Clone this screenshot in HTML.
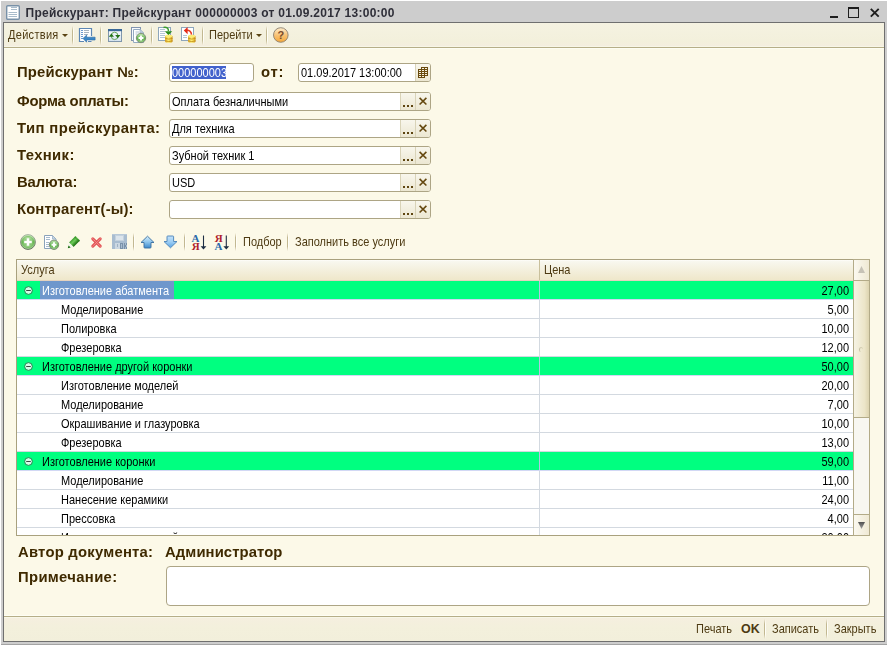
<!DOCTYPE html>
<html><head><meta charset="utf-8">
<style>
*{box-sizing:border-box;margin:0;padding:0}
html,body{width:887px;height:645px;overflow:hidden;background:#fff}
body{position:relative;font-family:"Liberation Sans",sans-serif;font-size:11px;color:#000}
.a{position:absolute}
.t{position:absolute;white-space:nowrap;line-height:13px;transform:scaleY(1.12);transform-origin:0 6.3px}
.lbl{position:absolute;white-space:nowrap;font-weight:bold;font-size:14px;line-height:16px;color:#3f2a00;letter-spacing:0.45px;transform:scaleX(1.06);transform-origin:0 0}
.fld{position:absolute;background:#fff;border:1px solid #ada585;border-radius:3px;height:19px}
.btn{position:absolute;top:0;bottom:0;width:15px;border-left:1px solid #d9d3b8;background:linear-gradient(#f8f6ec,#ece7d2)}
.sep{position:absolute;width:2px;background:linear-gradient(90deg,#c2b891 50%,#fffef8 50%);-webkit-mask-image:linear-gradient(transparent,#000 25%,#000 75%,transparent)}
.row{position:absolute;left:17px;width:836px;height:19px;border-bottom:1px solid #d3d9e0;background:#fff}
.row.g{background:#00ff80;border-bottom-color:#d2d8f4}
.cell{position:absolute;top:3px;line-height:13px;white-space:nowrap;transform:scaleY(1.12);transform-origin:0 6.3px}
</style></head><body>
<!-- window frame -->
<div class="a" style="left:1px;top:1px;width:886px;height:644px;background:#cdcdcd"></div>
<div class="a" style="left:1px;top:644px;width:886px;height:1px;background:#a4a4a4"></div>
<!-- title icon -->
<svg class="a" style="left:5px;top:4px" width="16" height="17" viewBox="0 0 16 17">
 <rect x="1.7" y="1.7" width="12.6" height="13.6" rx="1" fill="#fff" stroke="#7891a8" stroke-width="1.4"/>
 <path d="M6 3.5h6M6 5.5h6M3.5 8.5h8.5M3.5 10.5h8.5M3.5 12.5h8.5" stroke="#a9bccb" stroke-width="1"/>
</svg>
<div class="t" style="transform:scaleY(1.08);transform-origin:0 7px;left:25.5px;top:7px;font-weight:bold;font-size:12px;letter-spacing:0.26px;color:#2e2e38">Прейскурант: Прейскурант 000000003 от 01.09.2017 13:00:00</div>
<!-- window buttons -->
<div class="a" style="left:830px;top:16px;width:8px;height:2px;background:#1e1e1e"></div>
<div class="a" style="left:848px;top:7px;width:11px;height:11px;border:1px solid #1e1e1e;border-top-width:2px"></div>
<svg class="a" style="left:869px;top:7px" width="12" height="12" viewBox="0 0 12 12"><path d="M1.8 1.8L9.7 9.7M9.7 1.8L1.8 9.7" stroke="#1e1e1e" stroke-width="1.9"/></svg>
<!-- window content border -->
<div class="a" style="left:3px;top:22px;width:882px;height:620px;background:#6f6f6f"></div>
<div class="a" style="left:4px;top:23px;width:880px;height:618px;background:#fcf9e8"></div>

<!-- top toolbar -->
<div class="a" style="left:4px;top:23px;width:880px;height:23px;background:linear-gradient(#f5f2e1,#f3f0dc 80%,#f4eedf)"></div>
<div class="a" style="left:4px;top:46px;width:880px;height:1px;background:#f7f6e7"></div>
<div class="a" style="left:4px;top:47px;width:880px;height:1px;background:#b6ae88"></div>
<div class="a" style="left:4px;top:48px;width:880px;height:1px;background:#fdfdf3"></div>
<div class="t" style="left:8px;top:29px;color:#4d3a12;letter-spacing:0.3px">Действия</div>
<svg class="a" style="left:62px;top:34px" width="6" height="3"><path d="M0 0H6L3 3Z" fill="#5a4414"/></svg>
<div class="sep" style="left:72px;top:26px;height:19px"></div>
<!-- icon: load -->
<svg class="a" style="left:76px;top:24px" width="24" height="22" viewBox="0 0 24 22">
 <path d="M3.5 4.5h12v13h-12z" fill="#fff"/>
 <path d="M15.5 12V4.5h-12v13h4.5M12 17.5h3.5" fill="none" stroke="#5c86b4" stroke-width="1.2"/>
 <g stroke-width="1"><path d="M5 6.5h2M5 8.5h2M5 10.5h2M5 12.5h2M5 14.5h2" stroke="#6c9ad0"/><path d="M8 6.5h5M8 8.5h5M8 10.5h4" stroke="#a8b4c0"/></g>
 <path d="M7 14.5l3.6-3.5v2.2h8.5v2.8h-8.5v2.2z" fill="#3a86c6" stroke="#2a6aa4" stroke-width="0.6"/>
</svg>
<div class="sep" style="left:100px;top:26px;height:19px"></div>
<!-- icon: refresh -->
<svg class="a" style="left:104px;top:24px" width="24" height="22" viewBox="0 0 24 22">
 <defs><linearGradient id="rg" x1="0" y1="0" x2="0" y2="1"><stop offset="0" stop-color="#fafcff"/><stop offset="1" stop-color="#d4e2ee"/></linearGradient></defs>
 <rect x="4.5" y="5.5" width="13" height="12" fill="url(#rg)" stroke="#8096ac"/>
 <rect x="4" y="5" width="14" height="2.2" fill="#3a6898"/>
 <ellipse cx="10.6" cy="11.9" rx="3.4" ry="3.7" fill="none" stroke="#5aa04a" stroke-width="0.9"/>
 <path d="M4.8 12.8h5.2l-2.6-3.4z" fill="#237316"/>
 <path d="M11.2 10.9h5.2l-2.6 3.4z" fill="#237316"/>
</svg>
<!-- icon: copy new -->
<svg class="a" style="left:127px;top:24px" width="24" height="22" viewBox="0 0 24 22">
 <rect x="4.5" y="3.5" width="9" height="13" fill="#f8fafc" stroke="#8294b0"/>
 <path d="M6.5 5.5h6.5l3.5 3.5v9.5h-10z" fill="#fff" stroke="#94aac0"/>
 <path d="M13 5.5v3.5h3.5z" fill="#c8d8e6" stroke="#a0b4c6" stroke-width="0.8"/>
 <path d="M8.5 8h3.5M8.5 10h2" stroke="#b0c0d0"/>
 <defs><linearGradient id="cg" x1="0" y1="0" x2="0" y2="1"><stop offset="0" stop-color="#c4eab4"/><stop offset="0.55" stop-color="#62b24e"/><stop offset="1" stop-color="#9ccf8c"/></linearGradient></defs>
 <circle cx="14" cy="14" r="4.7" fill="url(#cg)" stroke="#76866f" stroke-width="0.9"/>
 <path d="M14 11.5v5M11.5 14h5" stroke="#fff" stroke-width="1.9"/>
</svg>
<div class="sep" style="left:151px;top:26px;height:19px"></div>
<!-- icon: doc with coins green -->
<svg class="a" style="left:154px;top:23px" width="24" height="22" viewBox="0 0 24 22">
 <defs><linearGradient id="coin" x1="0" y1="0" x2="1" y2="0"><stop offset="0" stop-color="#d8a424"/><stop offset="0.4" stop-color="#fff27a"/><stop offset="0.7" stop-color="#f4d850"/><stop offset="1" stop-color="#c88c18"/></linearGradient></defs>
 <rect x="4.5" y="4.5" width="12" height="13" fill="#fff" stroke="#8ea6bc"/>
 <path d="M6 6.5h5M6 8.5h5M6 10.5h5M6 12.5h5M6 14.5h5" stroke="#b4c6d6"/>
 <path d="M9.5 4.5c3 -0.6 5 0.5 5 3.5" fill="none" stroke="#3c9c2c" stroke-width="1.5"/>
 <path d="M10.8 8.3h7.4l-3.7 3.9z" fill="#2a8c1c"/>
 <g><ellipse cx="14.8" cy="18.3" rx="3.7" ry="1.5" fill="url(#coin)"/><rect x="11.1" y="15.6" width="7.4" height="2.7" fill="url(#coin)"/>
 <ellipse cx="14.8" cy="15.6" rx="3.7" ry="1.3" fill="url(#coin)"/><rect x="11.1" y="13" width="7.4" height="2.6" fill="url(#coin)"/>
 <ellipse cx="14.8" cy="13" rx="3.7" ry="1.2" fill="#fbec78"/>
 <path d="M11.3 15.4q3.5 1.4 7 0M11.3 17.9q3.5 1.4 7 0" stroke="#c08a14" stroke-width="0.8" fill="none"/></g>
</svg>
<!-- icon: doc with coins red -->
<svg class="a" style="left:177px;top:23px" width="24" height="22" viewBox="0 0 24 22">
 <rect x="4.5" y="4.5" width="12" height="13" fill="#fff" stroke="#8ea6bc"/>
 <path d="M6 12.5h4M6 14.5h4" stroke="#b4c6d6"/>
 <path d="M9 7.5c3 -0.8 5.5 0.8 5.5 4.3" fill="none" stroke="#e83a22" stroke-width="1.6"/>
 <path d="M6.8 7.6l3.8-3.7v7.4z" fill="#e42a18"/>
 <g><ellipse cx="14.8" cy="18.3" rx="3.7" ry="1.5" fill="url(#coin)"/><rect x="11.1" y="15.6" width="7.4" height="2.7" fill="url(#coin)"/>
 <ellipse cx="14.8" cy="15.6" rx="3.7" ry="1.3" fill="url(#coin)"/><rect x="11.1" y="13" width="7.4" height="2.6" fill="url(#coin)"/>
 <ellipse cx="14.8" cy="13" rx="3.7" ry="1.2" fill="#fbec78"/>
 <path d="M11.3 15.4q3.5 1.4 7 0M11.3 17.9q3.5 1.4 7 0" stroke="#c08a14" stroke-width="0.8" fill="none"/></g>
</svg>
<div class="sep" style="left:202px;top:26px;height:19px"></div>
<div class="t" style="left:209px;top:29px;color:#4d3a12">Перейти</div>
<svg class="a" style="left:256px;top:34px" width="6" height="3"><path d="M0 0H6L3 3Z" fill="#5a4414"/></svg>
<div class="sep" style="left:266px;top:26px;height:19px"></div>
<svg class="a" style="left:272px;top:27px" width="17" height="17" viewBox="0 0 17 17">
 <defs><linearGradient id="hg" x1="0" y1="0" x2="0" y2="1"><stop offset="0" stop-color="#fdeccc"/><stop offset="0.55" stop-color="#f8c070"/><stop offset="1" stop-color="#f4a838"/></linearGradient></defs>
 <circle cx="8.8" cy="8" r="7.3" fill="url(#hg)" stroke="#8c8070" stroke-width="0.9"/>
 <text x="8.8" y="12.3" text-anchor="middle" font-family="Liberation Sans" font-weight="bold" font-size="11" fill="#7a4c2a">?</text>
</svg>

<!-- form labels -->
<div class="lbl" style="left:17px;top:64px;letter-spacing:0.127px">Прейскурант №:</div>
<div class="lbl" style="left:17px;top:93px;letter-spacing:-0.193px">Форма оплаты:</div>
<div class="lbl" style="left:17px;top:120px;letter-spacing:0.377px">Тип прейскуранта:</div>
<div class="lbl" style="left:17px;top:147px;letter-spacing:0.357px">Техник:</div>
<div class="lbl" style="left:17px;top:174px;letter-spacing:-0.114px">Валюта:</div>
<div class="lbl" style="left:17px;top:201px;letter-spacing:0.119px">Контрагент(-ы):</div>

<!-- number field -->
<div class="fld" style="left:169px;top:63px;width:85px"></div>
<div class="a" style="left:172px;top:66px;width:54px;height:13px;background:#4262cc"></div>
<div class="t" style="left:172px;top:67px;color:#fff">000000003</div>
<div class="lbl" style="left:261px;top:64px;letter-spacing:0.672px">от:</div>
<!-- date field -->
<div class="fld" style="left:298px;top:63px;width:133px">
  <div class="btn" style="right:0;border-radius:0 2px 2px 0"></div>
</div>
<div class="t" style="left:301px;top:67px">01.09.2017 13:00:00</div>
<svg class="a" style="left:418px;top:67px" width="10" height="11" viewBox="0 0 10 11" shape-rendering="crispEdges"><path d="M3 0H10V9H7V11H0V2H3Z" fill="#6a4a0e"/><g fill="#f6f2e0"><rect x="4" y="1" width="2" height="1"/><rect x="7" y="1" width="2" height="1"/><rect x="1" y="3" width="2" height="1"/><rect x="4" y="3" width="2" height="1"/><rect x="7" y="3" width="2" height="1"/><rect x="1" y="5" width="2" height="1"/><rect x="4" y="5" width="2" height="1"/><rect x="7" y="5" width="2" height="1"/><rect x="1" y="7" width="2" height="1"/><rect x="4" y="7" width="2" height="1"/><rect x="7" y="7" width="2" height="1"/><rect x="1" y="9" width="2" height="1"/><rect x="4" y="9" width="2" height="1"/></g></svg>

<!-- choice fields -->
<div class="fld" style="left:169px;top:92px;width:262px"><div class="btn" style="right:15px"></div><div class="btn" style="right:0;border-radius:0 2px 2px 0"></div></div>
<div class="t" style="left:172px;top:96px">Оплата безналичными</div>
<div class="fld" style="left:169px;top:119px;width:262px"><div class="btn" style="right:15px"></div><div class="btn" style="right:0;border-radius:0 2px 2px 0"></div></div>
<div class="t" style="left:172px;top:123px">Для техника</div>
<div class="fld" style="left:169px;top:146px;width:262px"><div class="btn" style="right:15px"></div><div class="btn" style="right:0;border-radius:0 2px 2px 0"></div></div>
<div class="t" style="left:172px;top:150px">Зубной техник 1</div>
<div class="fld" style="left:169px;top:173px;width:262px"><div class="btn" style="right:15px"></div><div class="btn" style="right:0;border-radius:0 2px 2px 0"></div></div>
<div class="t" style="left:172px;top:177px">USD</div>
<div class="fld" style="left:169px;top:200px;width:262px"><div class="btn" style="right:15px"></div><div class="btn" style="right:0;border-radius:0 2px 2px 0"></div></div>

<!-- dots & x glyphs -->
<svg class="a" style="left:400px;top:92px" width="31" height="135">
 <g fill="#5e4510">
  <rect x="3" y="13" width="2" height="2"/><rect x="7" y="13" width="2" height="2"/><rect x="11" y="13" width="2" height="2"/>
  <rect x="3" y="40" width="2" height="2"/><rect x="7" y="40" width="2" height="2"/><rect x="11" y="40" width="2" height="2"/>
  <rect x="3" y="67" width="2" height="2"/><rect x="7" y="67" width="2" height="2"/><rect x="11" y="67" width="2" height="2"/>
  <rect x="3" y="94" width="2" height="2"/><rect x="7" y="94" width="2" height="2"/><rect x="11" y="94" width="2" height="2"/>
  <rect x="3" y="121" width="2" height="2"/><rect x="7" y="121" width="2" height="2"/><rect x="11" y="121" width="2" height="2"/>
 </g>
 <g stroke="#654810" stroke-width="1.6">
  <path d="M19.6 5.9l6.8 6.6M26.4 5.9l-6.8 6.6"/>
  <path d="M19.6 32.9l6.8 6.6M26.4 32.9l-6.8 6.6"/>
  <path d="M19.6 59.9l6.8 6.6M26.4 59.9l-6.8 6.6"/>
  <path d="M19.6 86.9l6.8 6.6M26.4 86.9l-6.8 6.6"/>
  <path d="M19.6 113.9l6.8 6.6M26.4 113.9l-6.8 6.6"/>
 </g>
</svg>

<!-- table toolbar -->
<svg class="a" style="left:17px;top:231px" width="24" height="22" viewBox="0 0 24 22">
 <defs><linearGradient id="g1" x1="0" y1="0" x2="0" y2="1"><stop offset="0" stop-color="#cdeebc"/><stop offset="0.5" stop-color="#78c064"/><stop offset="1" stop-color="#a8d898"/></linearGradient><linearGradient id="g1s" x1="0" y1="0" x2="0" y2="1"><stop offset="0" stop-color="#a8b4a4"/><stop offset="1" stop-color="#606c5c"/></linearGradient></defs>
 <circle cx="11" cy="11" r="7.4" fill="url(#g1)" stroke="url(#g1s)" stroke-width="1"/>
 <circle cx="11" cy="11" r="5.6" fill="none" stroke="#5aa84a" stroke-width="0.8" opacity="0.6"/>
 <path d="M11 7.2v7.6M7.2 11h7.6" stroke="#fff" stroke-width="2.6"/>
</svg>
<svg class="a" style="left:40px;top:231px" width="24" height="22" viewBox="0 0 24 22">
 <path d="M4.5 4.5h8l3.5 3.5v9.5h-11.5z" fill="#fff" stroke="#8aa2ba"/>
 <path d="M12.5 4.5v3.5h3.5z" fill="#c8dae8" stroke="#9ab0c4" stroke-width="0.8"/>
 <path d="M6 6.5h4M6 8.5h4M6 11.5h3M6 13.5h3M6 15.5h3" stroke="#a6bacc"/>
 <defs><linearGradient id="g2" x1="0" y1="0" x2="0" y2="1"><stop offset="0" stop-color="#c4eab4"/><stop offset="0.55" stop-color="#62b24e"/><stop offset="1" stop-color="#9ccf8c"/></linearGradient></defs>
 <circle cx="14" cy="13.8" r="4.7" fill="url(#g2)" stroke="#76866f" stroke-width="0.9"/>
 <path d="M14 11.3v5M11.5 13.8h5" stroke="#fff" stroke-width="1.9"/>
</svg>
<svg class="a" style="left:63px;top:231px" width="24" height="22" viewBox="0 0 24 22">
 <defs><linearGradient id="pg" gradientUnits="userSpaceOnUse" x1="9.2" y1="8.2" x2="13.8" y2="12.8"><stop offset="0" stop-color="#3a9a2a"/><stop offset="0.4" stop-color="#6ccc58"/><stop offset="1" stop-color="#166a0c"/></linearGradient></defs>
 <path d="M6 11.5L12.5 5L17 9.5L10.5 16z" fill="url(#pg)"/>
 <path d="M11.6 5.9L16.1 10.4" stroke="#2a7a1e" stroke-width="0.9" opacity="0.7"/>
 <path d="M6 11.5L10.5 16L4.8 17.2z" fill="#f2f6ec"/>
 <path d="M4.8 17.2L5.6 14.4L7.6 16.4z" fill="#1a6a0e"/>
</svg>
<svg class="a" style="left:86px;top:231px" width="24" height="22" viewBox="0 0 24 22">
 <path d="M6.8 7.8l7.4 7.4M14.2 7.8l-7.4 7.4" stroke="#e4585a" stroke-width="3.1" stroke-linecap="round"/>
 <path d="M6.8 7.8l7.4 7.4M14.2 7.8l-7.4 7.4" stroke="#f4a09a" stroke-width="0.8" stroke-linecap="round" stroke-dasharray="0.8 1.2"/>
</svg>
<svg class="a" style="left:108px;top:231px" width="24" height="22" viewBox="0 0 24 22" shape-rendering="crispEdges">
 <rect x="4" y="3" width="15" height="15" fill="#a9bdd0"/>
 <rect x="4" y="3" width="15" height="1" fill="#b8c9d8"/>
 <rect x="7" y="4" width="9" height="6" fill="#c4d2de"/>
 <rect x="8" y="5" width="7" height="4" fill="#dce5ec"/>
 <rect x="7" y="12" width="5" height="6" fill="#ccd8e2"/>
 <g fill="#7a92aa"><rect x="12" y="12" width="3" height="1"/><rect x="12" y="17" width="3" height="1"/><rect x="12" y="13" width="1" height="4"/><rect x="14" y="13" width="1" height="4"/>
 <rect x="16" y="12" width="1" height="6"/><rect x="17" y="14" width="1" height="2"/><rect x="18" y="12" width="1" height="2"/><rect x="18" y="16" width="1" height="2"/></g>
 <rect x="9" y="13" width="1" height="3" fill="#9fb2c4"/>
</svg>
<div class="sep" style="left:133px;top:233px;height:18px"></div>
<svg class="a" style="left:136px;top:231px" width="24" height="22" viewBox="0 0 24 22">
 <defs><linearGradient id="ua" x1="0" y1="0" x2="0" y2="1"><stop offset="0" stop-color="#d4eefc"/><stop offset="0.5" stop-color="#8cc4ec"/><stop offset="1" stop-color="#3a88cc"/></linearGradient></defs>
 <path d="M11.5 5.2L18 11.5H15V16.3Q15 17 14.3 17H8.7Q8 17 8 16.3V11.5H5Z" fill="url(#ua)" stroke="#3a6e9e" stroke-width="0.9" stroke-linejoin="round"/>
</svg>
<svg class="a" style="left:159px;top:231px" width="24" height="22" viewBox="0 0 24 22">
 <defs><linearGradient id="da" x1="0" y1="0" x2="0" y2="1"><stop offset="0" stop-color="#c4e2fa"/><stop offset="0.5" stop-color="#9ccef4"/><stop offset="1" stop-color="#5aa4e4"/></linearGradient></defs>
 <path d="M8.7 5H13.9Q14.6 5 14.6 5.7V10.5H18L11.5 16.8L5 10.5H8V5.7Q8 5 8.7 5Z" fill="url(#da)" stroke="#4a82b8" stroke-width="0.9" stroke-linejoin="round"/>
</svg>
<div class="sep" style="left:184px;top:233px;height:18px"></div>
<svg class="a" style="left:186px;top:230px" width="24" height="22" viewBox="0 0 24 22">
 <text x="5.6" y="11.9" font-family="Liberation Serif" font-weight="bold" font-size="11" fill="#2a6aaa">A</text>
 <text x="5.8" y="20" font-family="Liberation Serif" font-weight="bold" font-size="11" fill="#b01e2e">Я</text>
 <path d="M17.5 5.5V18" stroke="#1e2e44" stroke-width="1.1"/>
 <path d="M14.6 16.2L17.5 19.6L20.4 16.2z" fill="#1e2e44"/>
</svg>
<svg class="a" style="left:209px;top:230px" width="24" height="22" viewBox="0 0 24 22">
 <text x="5.8" y="12" font-family="Liberation Serif" font-weight="bold" font-size="11" fill="#b01e2e">Я</text>
 <text x="5.6" y="20" font-family="Liberation Serif" font-weight="bold" font-size="11" fill="#2a6aaa">A</text>
 <path d="M17.3 5.5V18" stroke="#1e2e44" stroke-width="1.1"/>
 <path d="M14.4 16.2L17.3 19.6L20.2 16.2z" fill="#1e2e44"/>
</svg>
<div class="sep" style="left:235px;top:233px;height:18px"></div>
<div class="t" style="left:243px;top:236px;color:#4d3a12">Подбор</div>
<div class="sep" style="left:287px;top:233px;height:18px"></div>
<div class="t" style="left:295px;top:236px;color:#4d3a12">Заполнить все услуги</div>

<!-- table -->
<div class="a" style="left:16px;top:259px;width:854px;height:277px;background:#a9a17e"></div>
<div class="a" style="left:17px;top:260px;width:852px;height:275px;background:#fff;overflow:hidden">
  <!-- header -->
  <div class="a" style="left:0;top:0;width:836px;height:21px;background:linear-gradient(#fefefa 0,#f8f7ee 8%,#efe8cc 95%);border-bottom:1px solid #e4d2be"></div>
  <div class="a" style="left:522px;top:0;width:1px;height:20px;background:#c9c09c"></div>
  <div class="t" style="left:4px;top:4px;color:#4d3a12">Услуга</div>
  <div class="t" style="left:527px;top:4px;color:#4d3a12">Цена</div>
  <!--ROWS--><div class="row g" style="left:0;top:21px"></div>
<div class="a" style="left:522px;top:21px;width:1px;height:18px;background:#b4c6e2"></div>
<div class="a" style="left:23px;top:21px;width:134px;height:18px;background:#6f97cc"></div>
<svg class="a" style="left:5px;top:24px" width="13" height="13" viewBox="0 0 13 13"><circle cx="6.5" cy="6.5" r="3.9" fill="#d4fbe8" stroke="#15864a" stroke-width="1"/><path d="M4.2 6.5h4.6" stroke="#3a4a40" stroke-width="1"/></svg>
<div class="cell" style="left:25px;top:25px;color:#fff">Изготовление абатмента</div>
<div class="cell" style="right:20px;top:25px">27,00</div>
<div class="row" style="left:0;top:40px"></div>
<div class="a" style="left:522px;top:40px;width:1px;height:18px;background:#d3d9e0"></div>
<div class="cell" style="left:44px;top:44px">Моделирование</div>
<div class="cell" style="right:20px;top:44px">5,00</div>
<div class="row" style="left:0;top:59px"></div>
<div class="a" style="left:522px;top:59px;width:1px;height:18px;background:#d3d9e0"></div>
<div class="cell" style="left:44px;top:63px">Полировка</div>
<div class="cell" style="right:20px;top:63px">10,00</div>
<div class="row" style="left:0;top:78px"></div>
<div class="a" style="left:522px;top:78px;width:1px;height:18px;background:#d3d9e0"></div>
<div class="cell" style="left:44px;top:82px">Фрезеровка</div>
<div class="cell" style="right:20px;top:82px">12,00</div>
<div class="row g" style="left:0;top:97px"></div>
<div class="a" style="left:522px;top:97px;width:1px;height:18px;background:#b4c6e2"></div>
<svg class="a" style="left:5px;top:100px" width="13" height="13" viewBox="0 0 13 13"><circle cx="6.5" cy="6.5" r="3.9" fill="#d4fbe8" stroke="#15864a" stroke-width="1"/><path d="M4.2 6.5h4.6" stroke="#3a4a40" stroke-width="1"/></svg>
<div class="cell" style="left:25px;top:101px;color:#000">Изготовление другой коронки</div>
<div class="cell" style="right:20px;top:101px">50,00</div>
<div class="row" style="left:0;top:116px"></div>
<div class="a" style="left:522px;top:116px;width:1px;height:18px;background:#d3d9e0"></div>
<div class="cell" style="left:44px;top:120px">Изготовление моделей</div>
<div class="cell" style="right:20px;top:120px">20,00</div>
<div class="row" style="left:0;top:135px"></div>
<div class="a" style="left:522px;top:135px;width:1px;height:18px;background:#d3d9e0"></div>
<div class="cell" style="left:44px;top:139px">Моделирование</div>
<div class="cell" style="right:20px;top:139px">7,00</div>
<div class="row" style="left:0;top:154px"></div>
<div class="a" style="left:522px;top:154px;width:1px;height:18px;background:#d3d9e0"></div>
<div class="cell" style="left:44px;top:158px">Окрашивание и глазуровка</div>
<div class="cell" style="right:20px;top:158px">10,00</div>
<div class="row" style="left:0;top:173px"></div>
<div class="a" style="left:522px;top:173px;width:1px;height:18px;background:#d3d9e0"></div>
<div class="cell" style="left:44px;top:177px">Фрезеровка</div>
<div class="cell" style="right:20px;top:177px">13,00</div>
<div class="row g" style="left:0;top:192px"></div>
<div class="a" style="left:522px;top:192px;width:1px;height:18px;background:#b4c6e2"></div>
<svg class="a" style="left:5px;top:195px" width="13" height="13" viewBox="0 0 13 13"><circle cx="6.5" cy="6.5" r="3.9" fill="#d4fbe8" stroke="#15864a" stroke-width="1"/><path d="M4.2 6.5h4.6" stroke="#3a4a40" stroke-width="1"/></svg>
<div class="cell" style="left:25px;top:196px;color:#000">Изготовление коронки</div>
<div class="cell" style="right:20px;top:196px">59,00</div>
<div class="row" style="left:0;top:211px"></div>
<div class="a" style="left:522px;top:211px;width:1px;height:18px;background:#d3d9e0"></div>
<div class="cell" style="left:44px;top:215px">Моделирование</div>
<div class="cell" style="right:20px;top:215px">11,00</div>
<div class="row" style="left:0;top:230px"></div>
<div class="a" style="left:522px;top:230px;width:1px;height:18px;background:#d3d9e0"></div>
<div class="cell" style="left:44px;top:234px">Нанесение керамики</div>
<div class="cell" style="right:20px;top:234px">24,00</div>
<div class="row" style="left:0;top:249px"></div>
<div class="a" style="left:522px;top:249px;width:1px;height:18px;background:#d3d9e0"></div>
<div class="cell" style="left:44px;top:253px">Прессовка</div>
<div class="cell" style="right:20px;top:253px">4,00</div>
<div class="row" style="left:0;top:268px"></div>
<div class="a" style="left:522px;top:268px;width:1px;height:18px;background:#d3d9e0"></div>
<div class="cell" style="left:44px;top:272px">Изготовление моделей</div>
<div class="cell" style="right:20px;top:272px">20,00</div><!--/ROWS-->
</div>
<!-- scrollbar -->
<div class="a" style="left:853px;top:259px;width:17px;height:277px;background:#b3ab88"></div>
<div class="a" style="left:854px;top:260px;width:15px;height:20px;background:linear-gradient(90deg,#fbf9f0,#efe9d4)"></div>
<svg class="a" style="left:858px;top:266px" width="7" height="7"><path d="M3.5 0L7 7H0Z" fill="#c6c2b6"/></svg>
<div class="a" style="left:854px;top:281px;width:15px;height:136px;background:linear-gradient(90deg,#f6f3e4,#ece5c8 70%,#ddd4b0)"></div>
<div class="a" style="left:859px;top:347px;width:4px;height:5px;border-radius:50%;border-left:1.5px solid #c4bea0;border-top:1px solid #cfc9ad"></div>
<div class="a" style="left:854px;top:418px;width:15px;height:96px;background:#f8f7f1"></div>
<div class="a" style="left:854px;top:515px;width:15px;height:20px;background:linear-gradient(90deg,#fbf9f0,#efe9d4)"></div>
<svg class="a" style="left:858px;top:522px" width="7" height="7"><defs><linearGradient id="dt" x1="0" y1="0" x2="0" y2="1"><stop offset="0" stop-color="#505050"/><stop offset="1" stop-color="#a0a0a0"/></linearGradient></defs><path d="M0 0H7L3.5 7Z" fill="url(#dt)"/></svg>

<!-- bottom -->
<div class="lbl" style="left:18px;top:544px;letter-spacing:0.213px">Автор документа:</div>
<div class="lbl" style="left:165px;top:544px;letter-spacing:0.082px">Администратор</div>
<div class="lbl" style="left:18px;top:569px;letter-spacing:0.304px">Примечание:</div>
<div class="fld" style="left:166px;top:566px;width:704px;height:40px;border-radius:4px"></div>

<!-- bottom toolbar -->
<div class="a" style="left:4px;top:615px;width:880px;height:1px;background:#fefef4"></div>
<div class="a" style="left:4px;top:616px;width:880px;height:1px;background:#b6ae88"></div>
<div class="a" style="left:4px;top:617px;width:880px;height:1px;background:#f8f7e8"></div>
<div class="a" style="left:4px;top:618px;width:880px;height:23px;background:linear-gradient(#f5efdf,#f3f0dc 40%,#f2efdb)"></div>
<div class="t" style="left:696px;top:623px;color:#4d3a12">Печать</div>
<div class="t" style="transform:none;left:741px;top:623px;color:#4d3a12;font-weight:bold;font-size:12.5px">OK</div>
<div class="sep" style="left:764px;top:619px;height:20px"></div>
<div class="t" style="left:772px;top:623px;color:#4d3a12">Записать</div>
<div class="sep" style="left:826px;top:619px;height:20px"></div>
<div class="t" style="left:834px;top:623px;color:#4d3a12">Закрыть</div>
</body></html>
